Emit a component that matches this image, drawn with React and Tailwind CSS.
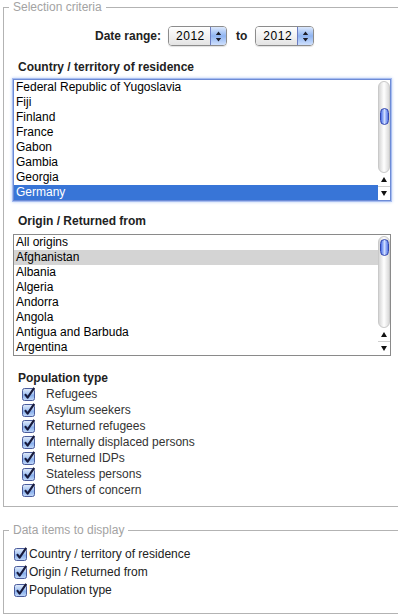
import React from 'react'

const countries = [
  'Federal Republic of Yugoslavia',
  'Fiji',
  'Finland',
  'France',
  'Gabon',
  'Gambia',
  'Georgia',
  'Germany',
]

const origins = [
  'All origins',
  'Afghanistan',
  'Albania',
  'Algeria',
  'Andorra',
  'Angola',
  'Antigua and Barbuda',
  'Argentina',
]

const popTypes = [
  'Refugees',
  'Asylum seekers',
  'Returned refugees',
  'Internally displaced persons',
  'Returned IDPs',
  'Stateless persons',
  'Others of concern',
]

const dataItems = ['Country / territory of residence', 'Origin / Returned from', 'Population type']

function Check() {
  return (
    <svg width="14" height="14" viewBox="0 0 14 14" className="shrink-0">
      <defs>
        <linearGradient id="cbg" x1="0" y1="0" x2="0" y2="1">
          <stop offset="0" stopColor="#e2ecfb" />
          <stop offset="0.45" stopColor="#a9c6f2" />
          <stop offset="0.55" stopColor="#86aeec" />
          <stop offset="1" stopColor="#c4dafa" />
        </linearGradient>
      </defs>
      <rect x="0.5" y="1.5" width="12" height="12" rx="2" fill="url(#cbg)" stroke="#4b5c9c" />
      <path d="M3 7.2 L5.6 10.6 L12.2 0.8" fill="none" stroke="#171a3c" strokeWidth="2.1" strokeLinejoin="round" />
    </svg>
  )
}

function YearSelect() {
  return (
    <div className="flex h-[20px] w-[59px] overflow-hidden rounded-[4px] border border-[#8c8c8c] shadow-[0_1px_1px_rgba(0,0,0,0.12)]">
      <div className="flex-1 bg-linear-to-b from-white to-[#e4e4e4] pl-[7px] text-[12px] leading-[18px] tracking-[0.5px] text-black">
        2012
      </div>
      <div className="flex w-[16px] items-center justify-center border-l border-[#6c7dc2] bg-linear-to-b from-[#dce8fc] via-[#8fb4f1] to-[#cfe0fd]">
        <svg width="7" height="11" viewBox="0 0 7 11">
          <path d="M3.5 0.5 L6.2 4 H0.8Z M0.8 7 H6.2 L3.5 10.5Z" fill="#1e1e2a" />
        </svg>
      </div>
    </div>
  )
}

function Scrollbar({ thumbTop }) {
  return (
    <div className="flex w-[12px] flex-col">
      <div className="mt-[1px] flex flex-1 flex-col rounded-full border border-[#c9c9c9] bg-linear-to-r from-[#d6d6d6] via-white to-[#dadada]">
        <div
          className="mx-auto h-[17px] w-[9px] rounded-full border border-[#3447b0] bg-linear-to-r from-[#4e6ee6] via-[#cfdcff] to-[#5776e6]"
          style={{ marginTop: thumbTop }}
        />
      </div>
      <div className="flex h-[27px] flex-col">
        <div className="flex flex-1 items-center justify-center border-b border-[#d0d0d0]">
          <svg width="6" height="5" viewBox="0 0 6 5">
            <path d="M3 0 L6 5 H0Z" fill="#111" />
          </svg>
        </div>
        <div className="flex flex-1 items-center justify-center">
          <svg width="6" height="5" viewBox="0 0 6 5">
            <path d="M0 0 H6 L3 5Z" fill="#111" />
          </svg>
        </div>
      </div>
    </div>
  )
}

function ListBox({ items, selected, selClass, focused, thumbTop, className }) {
  return (
    <div
      className={
        'ml-[9px] flex h-[122px] w-[378px] border bg-white ' +
        (focused
          ? 'border-[#6d8bd6] shadow-[0_0_0_1px_#a7bdf0,0_0_3px_1px_#b9cdf5] '
          : 'border-[#8a8a8a] ') +
        className
      }
    >
      <div className="flex flex-1 flex-col">
        {items.map((it, i) => (
          <div
            key={it}
            className={
              'h-[15px] pl-[2px] text-[12px] leading-[15px] ' + (i === selected ? selClass : 'text-black')
            }
          >
            {it}
          </div>
        ))}
      </div>
      <Scrollbar thumbTop={thumbTop} />
    </div>
  )
}

export default function App() {
  return (
    <div className="h-[616px] w-[398px] overflow-hidden bg-white font-['Liberation_Sans',Arial,sans-serif] text-[12px]">
      <fieldset className="ml-[3px] w-[430px] border border-[#b3b3b3] px-0 pb-[8px]">
        <legend className="ml-[5px] px-[4px] text-[12px] leading-[14px] text-[#a3a3a3]">Selection criteria</legend>

        <div className="mt-[12px] flex h-[20px] items-center pl-[91px]">
          <span className="mr-[7px] font-bold text-[#222]">Date range:</span>
          <YearSelect />
          <span className="ml-[9px] mr-[8px] font-bold text-[#222]">to</span>
          <YearSelect />
        </div>

        <div className="mt-[14px] h-[14px] pl-[14px] font-bold leading-[14px] text-[#222]">
          Country / territory of residence
        </div>
        <ListBox
          items={countries}
          selected={7}
          selClass="bg-[#3875d7] text-white"
          focused
          thumbTop={26}
          className="mt-[5px]"
        />

        <div className="mt-[13px] h-[14px] pl-[14px] font-bold leading-[14px] text-[#222]">
          Origin / Returned from
        </div>
        <ListBox
          items={origins}
          selected={1}
          selClass="bg-[#d4d4d4] text-black"
          thumbTop={2}
          className="mt-[6px]"
        />

        <div className="mt-[15px] h-[14px] pl-[14px] font-bold leading-[14px] text-[#222]">Population type</div>
        <div className="mt-[1px] flex flex-col">
          {popTypes.map((p) => (
            <div key={p} className="flex h-[16px] items-center gap-[10px] pl-[18px] text-[#333]">
              <Check />
              <span>{p}</span>
            </div>
          ))}
        </div>
      </fieldset>

      <fieldset className="ml-[3px] mt-[16px] w-[430px] border border-[#b3b3b3] px-0 pb-[14px]">
        <legend className="ml-[5px] px-[4px] text-[12px] leading-[14px] text-[#a3a3a3]">Data items to display</legend>
        <div className="mt-[8px] flex flex-col">
          {dataItems.map((d) => (
            <div key={d} className="flex h-[18px] items-center gap-[1px] pl-[10px] text-[#222]">
              <Check />
              <span>{d}</span>
            </div>
          ))}
        </div>
      </fieldset>
    </div>
  )
}
